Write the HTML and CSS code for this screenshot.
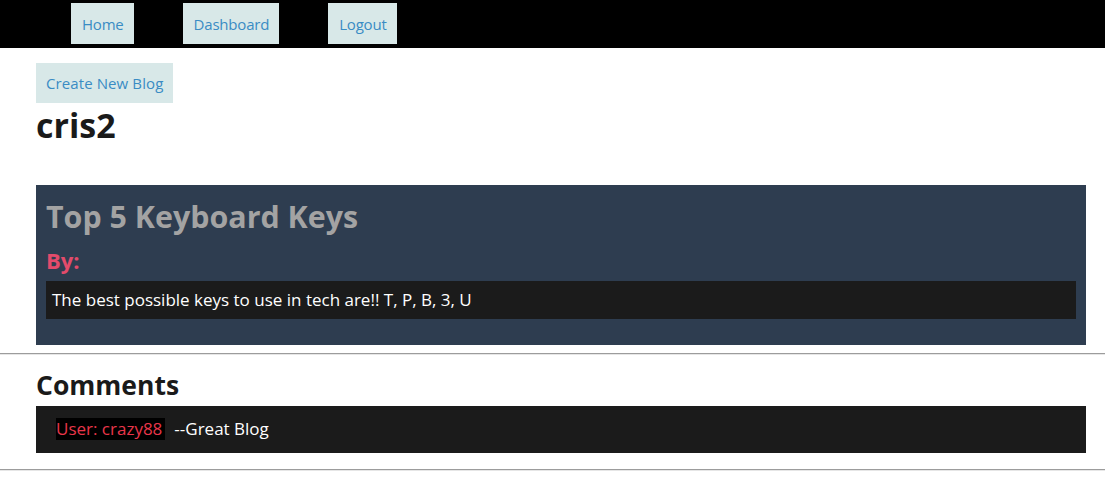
FILE: index.html
```html
<!DOCTYPE html>
<html>
<head>
<meta charset="utf-8">
<link rel="stylesheet" href="styles.css">
</head>
<body>
<nav class="nav">
  <a class="nav-btn" href="#">Home</a>
  <a class="nav-btn" href="#">Dashboard</a>
  <a class="nav-btn" href="#">Logout</a>
</nav>
<main class="main">
  <a class="create-btn" href="#">Create New Blog</a>
  <h1 class="user-name">cris2</h1>
  <section class="blog-card">
    <h2 class="blog-title">Top 5 Keyboard Keys</h2>
    <h3 class="blog-by">By:</h3>
    <p class="blog-content">The best possible keys to use in tech are!! T, P, B, 3, U</p>
  </section>
</main>
<hr class="rule">
<section class="comments">
  <h2 class="comments-title">Comments</h2>
  <div class="comment"><span class="comment-user">User: crazy88</span><span class="comment-text">--Great Blog</span></div>
</section>
<hr class="rule rule-last">
</body>
</html>
```

FILE: styles.css
```css
html, body {
  margin: 0;
  padding: 0;
  background: #ffffff;
  font-family: "Open Sans", "Noto Sans", sans-serif;
  color: #1a1a1a;
}

.nav {
  background: #000000;
  height: 48px;
  display: flex;
  align-items: flex-start;
  gap: 49px;
  padding: 3px 0 0 71px;
  box-sizing: border-box;
}

.nav-btn {
  display: flex;
  align-items: center;
  height: 41px;
  padding: 0 10px 0 11px;
  background: #d8e8e8;
  color: #3a8cc4;
  text-decoration: none;
  font-size: 15px;
  letter-spacing: -0.2px;
}

.main {
  padding: 15px 0 0 36px;
}

.create-btn {
  display: inline-flex;
  align-items: center;
  height: 40px;
  padding: 0 10px;
  background: #d8e8e8;
  color: #3a8cc4;
  text-decoration: none;
  font-size: 15px;
  letter-spacing: 0.1px;
}

.user-name {
  margin: 0 0 38px;
  font-size: 34px;
  line-height: 44px;
  font-weight: 700;
  color: #1a1a1a;
}

.blog-card {
  width: 1050px;
  background: #2e3d50;
  padding: 12px 10px 26px;
  box-sizing: border-box;
}

.blog-title {
  margin: 0;
  font-size: 30.4px;
  line-height: 40px;
  font-weight: 700;
  color: #a3a3a3;
}

.blog-by {
  margin: 8px 0 0;
  font-size: 22px;
  line-height: 30px;
  font-weight: 700;
  color: #e34b6b;
}

.blog-content {
  margin: 6px 0 0;
  background: #1b1b1b;
  color: #ffffff;
  font-size: 17px;
  line-height: 38px;
  padding: 0 6px;
}

.rule {
  margin: 8px 0 0;
  border: 0;
  border-top: 1px solid #9c9c9c;
  border-bottom: 1px solid #e6e6e6;
  height: 0;
}

.rule-last {
  margin-top: 16px;
}

.comments {
  padding: 0 0 0 36px;
}

.comments-title {
  margin: 10px 0 0;
  font-size: 26.5px;
  line-height: 40px;
  font-weight: 700;
  color: #1a1a1a;
}

.comment {
  width: 1050px;
  box-sizing: border-box;
  background: #1b1b1b;
  margin-top: 1px;
  padding: 11px 20px 13px;
  display: flex;
  align-items: center;
  font-size: 17px;
}

.comment-user {
  background: #000000;
  color: #e8364a;
  line-height: 22px;
  padding: 0 3px 0 0;
}

.comment-text {
  color: #ffffff;
  margin-left: 9px;
}
```
